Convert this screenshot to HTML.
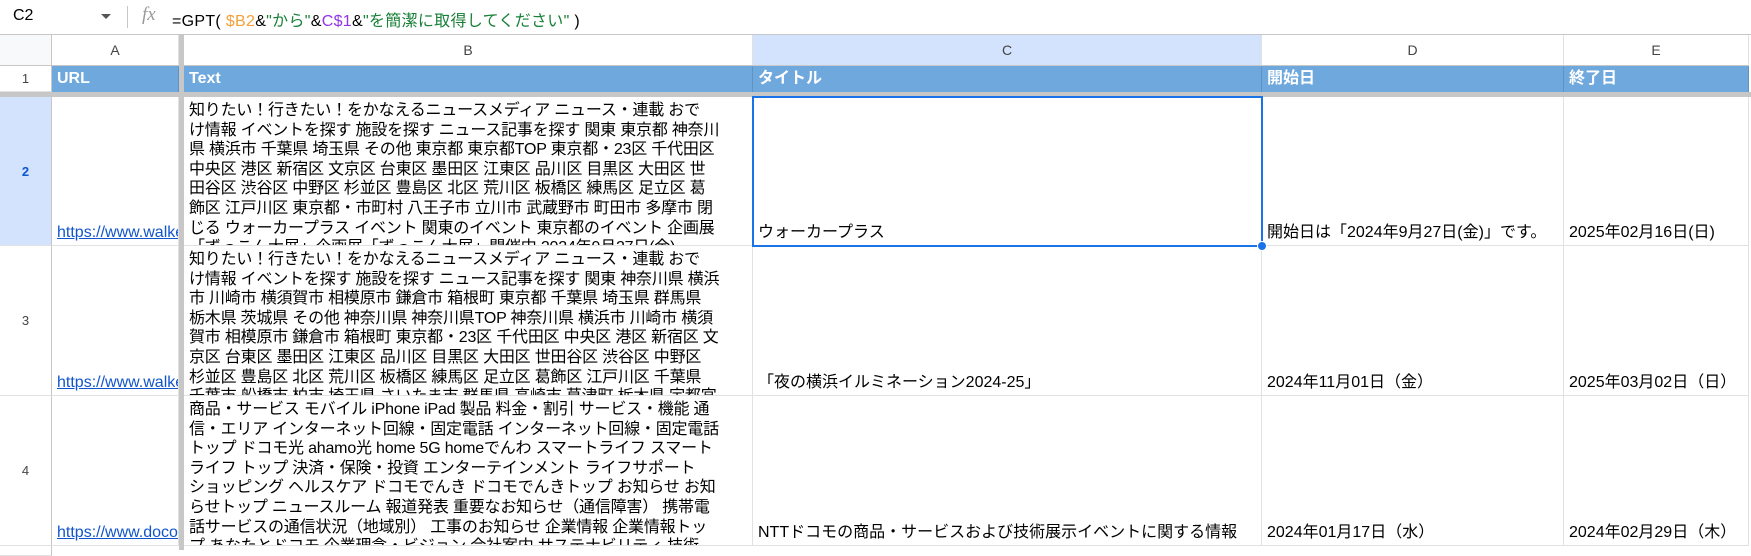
<!DOCTYPE html>
<html><head><meta charset="utf-8"><style>
*{margin:0;padding:0;box-sizing:border-box}
body{width:1751px;height:550px;overflow:hidden;background:#fff;font-family:"Liberation Sans","Noto Sans CJK JP",sans-serif;color:#000;position:relative}
.a{position:absolute}
.fb{left:0;top:0;width:1751px;height:35px;border-bottom:1px solid #c7c7c7;font-size:15px}
.ch{top:35px;height:31px;border-right:1px solid #e1e1e1;border-bottom:1px solid #c7c7c7;text-align:center;line-height:31px;font-size:14px;color:#444}
.r1{top:66px;height:26px;background:#6fa8dc;color:#fff;font-weight:bold;font-size:16px;line-height:26px;padding-left:5px;border-right:1px solid #5d93c5}
.rh{left:0;width:52px;border-right:1px solid #c7c7c7;border-bottom:1px solid #e1e1e1;text-align:center;font-size:13px;color:#444}
.c{border-right:1px solid #e1e1e1;border-bottom:1px solid #e1e1e1;overflow:hidden;font-size:16px;white-space:nowrap}
.bt{display:flex;align-items:flex-end;padding:0 4px 3px 5px;line-height:19px}
.tx{padding:4px 4px 0 5px;line-height:19.6px;letter-spacing:-0.2px}
a{color:#1155cc;text-decoration:underline}
</style></head><body>
<div class="a fb">
 <div class="a" style="left:13px;top:7px;font-size:16px">C2</div>
 <div class="a" style="left:101px;top:14px;width:0;height:0;border-left:5px solid transparent;border-right:5px solid transparent;border-top:5px solid #555"></div>
 <div class="a" style="left:127px;top:6px;width:1px;height:22px;background:#c7c7c7"></div>
 <div class="a" style="left:142px;top:4px;font-family:'Liberation Serif',serif;font-style:italic;font-size:19px;color:#999">fx</div>
 <div class="a" style="left:172px;top:7px;font-size:16px;white-space:nowrap;letter-spacing:0.3px">=GPT( <span style="color:#f4a03b">$B2</span>&amp;<span style="color:#188038">"から"</span>&amp;<span style="color:#9334e6">C$1</span>&amp;<span style="color:#188038">"を簡潔に取得してください"</span> )</div>
</div>
<!-- column headers -->
<div class="a ch" style="left:0;width:52px;background:#f8f9fa;border-right:1px solid #c7c7c7"></div>
<div class="a ch" style="left:52px;width:127px">A</div>
<div class="a ch" style="left:184px;width:569px">B</div>
<div class="a ch" style="left:753px;width:509px;background:#d3e3fd">C</div>
<div class="a ch" style="left:1262px;width:302px">D</div>
<div class="a ch" style="left:1564px;width:185px">E</div>
<!-- row 1 -->
<div class="a rh" style="top:66px;height:26px;line-height:26px">1</div>
<div class="a r1" style="left:52px;width:127px">URL</div>
<div class="a r1" style="left:184px;width:569px">Text</div>
<div class="a r1" style="left:753px;width:509px">タイトル</div>
<div class="a r1" style="left:1262px;width:302px">開始日</div>
<div class="a r1" style="left:1564px;width:185px">終了日</div>
<div class="a" style="left:0;top:92px;width:1751px;height:5px;background:#c7c7c7"></div>
<!-- row 2 -->
<div class="a rh" style="top:97px;height:149px;line-height:149px;background:#d3e3fd;font-weight:bold;color:#0b57d0">2</div>
<div class="a c bt" style="left:52px;top:97px;width:127px;height:149px"><a>https://www.walkerplus.com</a></div>
<div class="a c tx" style="left:184px;top:97px;width:569px;height:149px">知りたい！行きたい！をかなえるニュースメディア ニュース・連載 おで<br>け情報 イベントを探す 施設を探す ニュース記事を探す 関東 東京都 神奈川<br>県 横浜市 千葉県 埼玉県 その他 東京都 東京都TOP 東京都・23区 千代田区<br>中央区 港区 新宿区 文京区 台東区 墨田区 江東区 品川区 目黒区 大田区 世<br>田谷区 渋谷区 中野区 杉並区 豊島区 北区 荒川区 板橋区 練馬区 足立区 葛<br>飾区 江戸川区 東京都・市町村 八王子市 立川市 武蔵野市 町田市 多摩市 閉<br>じる ウォーカープラス イベント 関東のイベント 東京都のイベント 企画展<br>「ずっこん大展」企画展「ずっこん大展」開催中 2024年9月27日(金)</div>
<div class="a c bt" style="left:753px;top:97px;width:509px;height:149px">ウォーカープラス</div>
<div class="a c bt" style="left:1262px;top:97px;width:302px;height:149px">開始日は「2024年9月27日(金)」です。</div>
<div class="a c bt" style="left:1564px;top:97px;width:185px;height:149px">2025年02月16日(日)</div>
<!-- row 3 -->
<div class="a rh" style="top:246px;height:150px;line-height:150px">3</div>
<div class="a c bt" style="left:52px;top:246px;width:127px;height:150px"><a>https://www.walkerplus.com</a></div>
<div class="a c tx" style="left:184px;top:246px;width:569px;height:150px">知りたい！行きたい！をかなえるニュースメディア ニュース・連載 おで<br>け情報 イベントを探す 施設を探す ニュース記事を探す 関東 神奈川県 横浜<br>市 川崎市 横須賀市 相模原市 鎌倉市 箱根町 東京都 千葉県 埼玉県 群馬県<br>栃木県 茨城県 その他 神奈川県 神奈川県TOP 神奈川県 横浜市 川崎市 横須<br>賀市 相模原市 鎌倉市 箱根町 東京都・23区 千代田区 中央区 港区 新宿区 文<br>京区 台東区 墨田区 江東区 品川区 目黒区 大田区 世田谷区 渋谷区 中野区<br>杉並区 豊島区 北区 荒川区 板橋区 練馬区 足立区 葛飾区 江戸川区 千葉県<br>千葉市 船橋市 柏市 埼玉県 さいたま市 群馬県 高崎市 草津町 栃木県 宇都宮</div>
<div class="a c bt" style="left:753px;top:246px;width:509px;height:150px">「夜の横浜イルミネーション2024-25」</div>
<div class="a c bt" style="left:1262px;top:246px;width:302px;height:150px">2024年11月01日（金）</div>
<div class="a c bt" style="left:1564px;top:246px;width:185px;height:150px">2025年03月02日（日）</div>
<!-- row 4 -->
<div class="a rh" style="top:396px;height:150px;line-height:150px">4</div>
<div class="a c bt" style="left:52px;top:396px;width:127px;height:150px"><a>https://www.docomo.ne.jp</a></div>
<div class="a c tx" style="left:184px;top:396px;width:569px;height:150px">商品・サービス モバイル iPhone iPad 製品 料金・割引 サービス・機能 通<br>信・エリア インターネット回線・固定電話 インターネット回線・固定電話<br>トップ ドコモ光 ahamo光 home 5G homeでんわ スマートライフ スマート<br>ライフ トップ 決済・保険・投資 エンターテインメント ライフサポート<br>ショッピング ヘルスケア ドコモでんき ドコモでんきトップ お知らせ お知<br>らせトップ ニュースルーム 報道発表 重要なお知らせ（通信障害） 携帯電<br>話サービスの通信状況（地域別） 工事のお知らせ 企業情報 企業情報トッ<br>プ あなたとドコモ 企業理念・ビジョン 会社案内 サステナビリティ 技術</div>
<div class="a c bt" style="left:753px;top:396px;width:509px;height:150px">NTTドコモの商品・サービスおよび技術展示イベントに関する情報</div>
<div class="a c bt" style="left:1262px;top:396px;width:302px;height:150px">2024年01月17日（水）</div>
<div class="a c bt" style="left:1564px;top:396px;width:185px;height:150px">2024年02月29日（木）</div>
<div class="a rh" style="top:546px;height:10px"></div>
<div class="a" style="left:179px;top:35px;width:5px;height:515px;background:#c7c7c7"></div>
<!-- selection -->
<div class="a" style="left:752px;top:96px;width:511px;height:151px;border:2px solid #1a73e8"></div>
<div class="a" style="left:1257px;top:241px;width:10px;height:10px;border-radius:50%;background:#1a73e8;border:1px solid #fff"></div>
</body></html>
